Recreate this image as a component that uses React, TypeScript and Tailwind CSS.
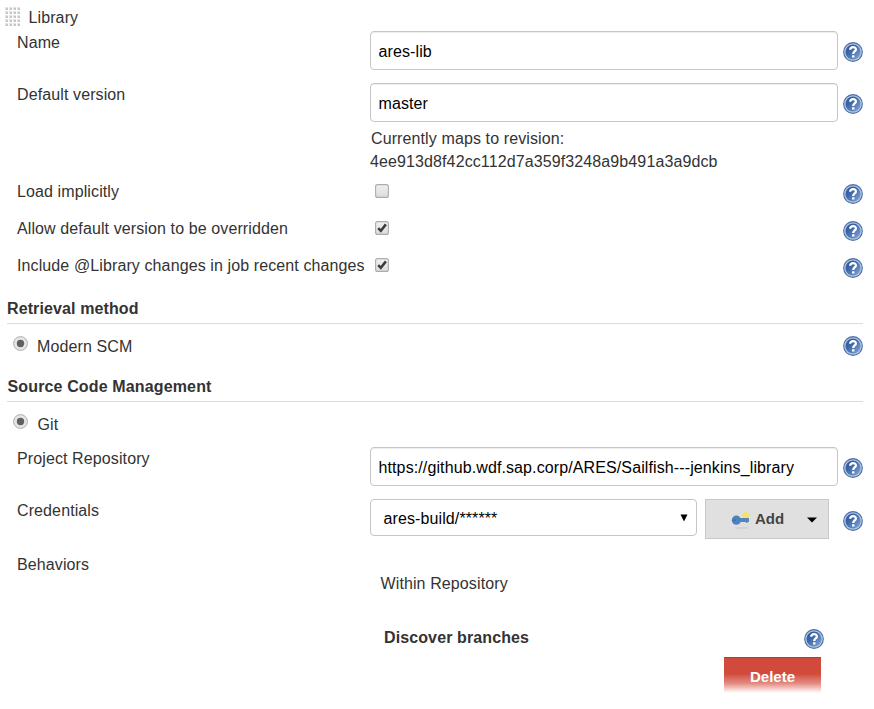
import React from 'react';

function Help({ className = '' }: { className?: string }) {
  return (
    <svg className={'h-5 w-5 shrink-0 ' + className} viewBox="0 0 20 20" aria-label="Help">
      <defs>
        <linearGradient id="helpFill" x1="0" y1="0" x2="1" y2="1">
          <stop offset="0" stopColor="#2b5296" />
          <stop offset="0.4" stopColor="#3f68a8" />
          <stop offset="1" stopColor="#86a9d8" />
        </linearGradient>
      </defs>
      <circle cx="10" cy="10" r="9.9" fill="#4a6da6" />
      <circle cx="10" cy="10" r="8.8" fill="#b0c5e2" />
      <circle cx="10" cy="10" r="7.5" fill="url(#helpFill)" />
      <path d="M7.2 7.8C7 4.2 12.9 4.2 12.9 7.4C12.9 9.5 10.2 9.4 10.2 12" fill="none" stroke="#fff" strokeWidth="2.3" />
      <rect x="9" y="13.2" width="2.5" height="2.4" rx=".5" fill="#fff" />
    </svg>
  );
}

function Label({ children, className = '' }: { children: React.ReactNode; className?: string }) {
  return <div className={'ml-[17px] w-[353px] shrink-0 whitespace-nowrap ' + className}>{children}</div>;
}

function Field({ children }: { children: React.ReactNode }) {
  return (
    <div className="flex h-[39px] w-[468px] items-center rounded-[4px] border border-[#c6c6c6] bg-white pl-[7.5px] pt-[2px] whitespace-nowrap text-black shadow-[inset_0_1px_1px_#eeeeee]">
      {children}
    </div>
  );
}

function Check({ checked = false }: { checked?: boolean }) {
  return (
    <svg className="mt-[3px] ml-[5px] h-[14px] w-[14px] shrink-0" viewBox="0 0 14 14">
      <defs>
        <linearGradient id="boxFill" x1="0" y1="0" x2="0" y2="1">
          <stop offset="0" stopColor="#f0f0f0" />
          <stop offset="1" stopColor="#dcdcdc" />
        </linearGradient>
      </defs>
      <rect x=".6" y=".6" width="12.8" height="12.8" rx="2" fill="url(#boxFill)" stroke="#acacac" strokeWidth="1.1" />
      {checked && <path d="M3.2 7.2L5.8 9.8L10.9 3.4" fill="none" stroke="#3c3c3c" strokeWidth="2.5" />}
    </svg>
  );
}

function Radio() {
  return (
    <svg className="ml-[13px] h-[15px] w-[15px] shrink-0" viewBox="0 0 15 15">
      <circle cx="7.5" cy="7.5" r="6.9" fill="#e6e6e6" stroke="#adadad" />
      <circle cx="7.5" cy="7.5" r="3.7" fill="#606060" />
    </svg>
  );
}

function Grip() {
  return (
    <svg className="ml-[5px] h-[21px] w-[15px] shrink-0" viewBox="0 0 15 21">
      {[0, 1, 2, 3, 4].map((r) =>
        [0, 1, 2, 3].map((c) => (
          <g key={r + '-' + c}>
            <rect x={c * 4} y={r * 4} width="3" height="3" fill="#e4e4e4" />
            <rect x={c * 4 + 1} y={r * 4 + 1} width="2" height="2" fill="#c6c6c6" />
          </g>
        )),
      )}
    </svg>
  );
}

function KeyIcon() {
  return (
    <svg className="mt-[3px] h-[18px] w-[20px] shrink-0" viewBox="0 0 20 18">
      <ellipse cx="11" cy="16" rx="7" ry=".9" fill="#d2d2d2" />
      <circle cx="14.8" cy="3.6" r="3.5" fill="#f1e474" />
      <path d="M8 6H18V10H16.8V10.8H14.8V10H8Z" fill="#5585ba" />
      <ellipse cx="5.4" cy="8.2" rx="4.6" ry="4.6" fill="#4d82bd" />
      <circle cx="3.4" cy="8.3" r="1" fill="#3a66a0" />
    </svg>
  );
}

export default function App() {
  return (
    <main className="flex h-[709px] w-[874px] flex-col overflow-hidden bg-white font-['Liberation_Sans',Arial,sans-serif] text-[16px] leading-5 tracking-[0.11px] text-[#333]">
      <div className="flex h-[31px] shrink-0 pt-[7px]">
        <Grip />
        <span className="mt-px ml-[8.5px]">Library</span>
      </div>
      <div className="flex h-[52px] shrink-0">
        <Label className="mt-[2px]">Name</Label>
        <Field>ares-lib</Field>
        <Help className="mt-[11px] ml-[5px]" />
      </div>
      <div className="flex h-[98px] shrink-0">
        <Label className="mt-[2px]">Default version</Label>
        <div>
          <Field>master</Field>
          <div className="mt-[7px] pl-px">Currently maps to revision:</div>
          <div className="mt-[3px]">4ee913d8f42cc112d7a359f3248a9b491a3a9dcb</div>
        </div>
        <Help className="mt-[11px] ml-[5px]" />
      </div>
      <div className="flex h-[37px] shrink-0">
        <Label className="mt-px">Load implicitly</Label>
        <Check />
        <Help className="mt-[3px] ml-[454px]" />
      </div>
      <div className="flex h-[37px] shrink-0">
        <Label className="mt-px">Allow default version to be overridden</Label>
        <Check checked />
        <Help className="mt-[3px] ml-[454px]" />
      </div>
      <div className="flex h-[37px] shrink-0">
        <Label className="mt-px">Include @Library changes in job recent changes</Label>
        <Check checked />
        <Help className="mt-[3px] ml-[454px]" />
      </div>
      <h2 className="mr-[11px] ml-[7px] h-8 shrink-0 border-b border-[#dcdcdc] pt-[7px] font-bold">Retrieval method</h2>
      <div className="flex h-[46px] shrink-0 pt-3">
        <Radio />
        <span className="mt-px ml-[9px] w-[806px]">Modern SCM</span>
        <Help />
      </div>
      <h2 className="mr-[11px] ml-[7px] h-8 shrink-0 border-b border-[#dcdcdc] pt-[7px] pl-[0.5px] font-bold tracking-[0.14px]">Source Code Management</h2>
      <div className="flex h-[45px] shrink-0 pt-3">
        <Radio />
        <span className="mt-px ml-[9.5px]">Git</span>
      </div>
      <div className="flex h-[52px] shrink-0">
        <Label className="mt-[2px]">Project Repository</Label>
        <Field>https://github.wdf.sap.corp/ARES/Sailfish---jenkins_library</Field>
        <Help className="mt-[11px] ml-[5px]" />
      </div>
      <div className="flex h-[54px] shrink-0">
        <Label className="mt-[2px]">Credentials</Label>
        <div className="flex h-[37px] w-[327px] items-center justify-between rounded-[4px] border border-[#c6c6c6] pt-[2px] pr-[8px] pl-[12.5px] text-black">
          <span>ares-build/******</span>
          <svg className="mb-[1px] h-[8px] w-[8px]" viewBox="0 0 8 8">
            <path d="M.5 .5H7.5L4 7.5Z" fill="#000" />
          </svg>
        </div>
        <button className="ml-[8px] flex h-10 w-[124px] items-center border border-[#c8c8c8] bg-[#e0e0e0] pl-[25px] text-[15px] font-bold tracking-normal text-[#444]">
          <KeyIcon />
          <span className="ml-[4px] w-[52px] text-left">Add</span>
          <svg className="mt-[2px] h-[6px] w-[10px]" viewBox="0 0 10 6">
            <path d="M0 .5H10L5 5.5Z" fill="#000" />
          </svg>
        </button>
        <Help className="mt-[12px] ml-[14px]" />
      </div>
      <div className="flex shrink-0">
        <Label className="mt-[2px]">Behaviors</Label>
        <div className="w-[454px] pt-[21px]">
          <div className="ml-[10.5px]">Within Repository</div>
          <div className="mt-[34px] ml-[14px] flex justify-between font-bold">
            <span>Discover branches</span>
            <Help className="mt-px" />
          </div>
          <button className="mt-[8px] ml-[354px] block h-[36px] w-[97px] border-t border-[#b83a2c] bg-linear-to-b from-[#d14a3b] from-45% via-[#e08a80] via-72% to-white pt-[2px] text-center text-[15px] font-bold tracking-normal text-white">
            Delete
          </button>
        </div>
      </div>
    </main>
  );
}
